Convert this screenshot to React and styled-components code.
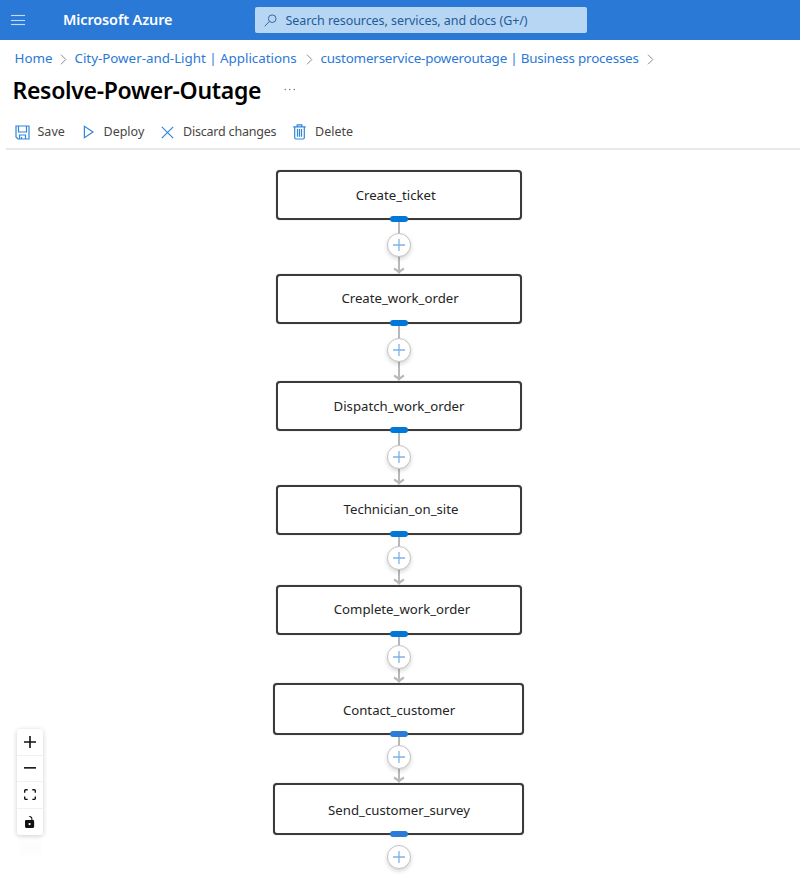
import React from 'react';
import styled, { createGlobalStyle } from 'styled-components';

const GlobalStyle = createGlobalStyle`
  * { box-sizing: border-box; }
  body {
    margin: 0;
    background: #fff;
    font-family: "Noto Sans", "Open Sans", sans-serif;
  }
  button { font: inherit; border: 0; background: none; padding: 0; margin: 0; }
`;

const Page = styled.div`
  width: 800px;
  height: 880px;
  display: flex;
  flex-direction: column;
  overflow: hidden;
  background: #fff;
`;

const TopBar = styled.header`
  height: 40px;
  flex: none;
  display: flex;
  align-items: center;
  background: #2a79d7;
`;

const MenuButton = styled.button`
  width: 14px;
  height: 12px;
  margin-left: 11px;
  display: flex;
  flex-direction: column;
  justify-content: space-between;
  padding: 1px 0;
`;

const MenuLine = styled.span`
  height: 1px;
  background: #c3daf5;
  box-shadow: 0 0 1px rgba(195, 218, 245, 0.6);
`;

const Brand = styled.div`
  width: 192px;
  padding-left: 38px;
  margin-right: -1px;
  color: #fff;
  font-size: 14.4px;
  font-weight: 600;
  line-height: 20px;
  letter-spacing: -0.08px;
  white-space: nowrap;
`;

const SearchBox = styled.div`
  width: 332px;
  height: 26px;
  margin-left: 39px;
  padding-left: 9px;
  display: flex;
  align-items: center;
  border-radius: 2px;
  background: #b7d6f3;
  color: #245b9b;
  font-size: 12.5px;
  line-height: 20px;
  letter-spacing: -0.06px;
  white-space: nowrap;
`;

const SearchText = styled.span`
  margin: 1px 0 0 8.5px;
`;

const Breadcrumb = styled.nav`
  height: 36px;
  flex: none;
  display: flex;
  align-items: center;
  padding-left: 14.5px;
`;

const Crumb = styled.a`
  width: ${(p) => p.$width}px;
  color: #2a79d7;
  font-size: 13.4px;
  line-height: 20px;
  letter-spacing: ${(p) => p.$spacing || 0}px;
  white-space: nowrap;
`;

const CrumbArrow = styled.svg`
  width: 7px;
  height: 11px;
  margin: 2px 8px 0 7px;
  flex: none;
`;

const TitleRow = styled.div`
  height: 38px;
  flex: none;
  display: flex;
  align-items: center;
  padding-left: 12.5px;
`;

const Title = styled.h1`
  width: 271px;
  margin: -11px 0 0;
  color: #000;
  font-size: 23px;
  font-weight: 600;
  line-height: 32px;
  letter-spacing: -0.31px;
  white-space: nowrap;
`;

const MoreDots = styled.svg`
  width: 12px;
  height: 3px;
  margin-top: -11px;
`;

const Toolbar = styled.div`
  height: 36px;
  flex: none;
  display: flex;
  align-items: center;
  margin-left: 6px;
  padding: 2px 0 0 8.5px;
  border-bottom: 2px solid #e9e9e9;
`;

const ToolButton = styled.button`
  width: ${(p) => p.$width}px;
  display: flex;
  align-items: center;
  gap: ${(p) => p.$gap}px;
  color: #484644;
  font-size: 12.5px;
  line-height: 18px;
  letter-spacing: ${(p) => p.$spacing || 0}px;
  white-space: nowrap;
  svg { flex: none; }
`;

const Canvas = styled.main`
  position: relative;
  flex: 1;
`;

const Node = styled.div`
  position: absolute;
  left: ${(p) => p.$x}px;
  top: ${(p) => p.$y}px;
  width: ${(p) => p.$w}px;
  height: ${(p) => p.$h}px;
  display: flex;
  align-items: center;
  justify-content: center;
  border: 2px solid #3b3b3b;
  border-radius: 4px;
  background: #fff;
  box-shadow: 0 0 1px rgba(50, 50, 50, 0.5);
`;

const NodeLabel = styled.span`
  position: relative;
  left: ${(p) => p.$dx}px;
  top: ${(p) => p.$dy}px;
  color: #242424;
  font-size: 13.2px;
  line-height: 18px;
  white-space: nowrap;
`;

const Handle = styled.span`
  position: absolute;
  left: 390px;
  top: ${(p) => p.$y}px;
  width: 18px;
  height: 6px;
  border-radius: 3px;
  background: ${(p) => p.$color};
`;

const Edge = styled.svg`
  position: absolute;
  left: 391px;
  top: ${(p) => p.$y}px;
`;

const AddButton = styled.button`
  position: absolute;
  left: 387px;
  top: ${(p) => p.$y}px;
  width: 24px;
  height: 24px;
  display: flex;
  align-items: center;
  justify-content: center;
  border: 1px solid #c3c2c6;
  border-radius: 50%;
  background: #fff;
  box-shadow: 0 2px 4px rgba(0, 0, 0, 0.17);
`;

const Controls = styled.div`
  position: absolute;
  left: 17px;
  top: 579px;
  width: 26px;
  display: flex;
  flex-direction: column;
  border-radius: 3px;
  background: #fff;
  box-shadow: 0 1px 5px rgba(0, 0, 0, 0.2);
`;

const ControlButton = styled.button`
  height: 26.5px;
  display: flex;
  align-items: center;
  justify-content: center;
  border-bottom: 1px solid #f1f1f1;
  &:last-child { border-bottom: 0; }
  svg { display: block; fill: #111; }
`;

const ControlsFade = styled.div`
  position: absolute;
  left: 20px;
  top: 692px;
  width: 21px;
  height: 13px;
  background: #fdfdfd;
`;

const Chevron = () => (
  <CrumbArrow viewBox="0 0 7 11" fill="none" stroke="#8a8a8a" strokeWidth="1">
    <path d="M1 .7 5.8 5.5 1 10.3" />
  </CrumbArrow>
);

const SearchIcon = () => (
  <svg width="13" height="13" viewBox="0 0 13 13" fill="none" stroke="#37699f" strokeWidth="1">
    <circle cx="8.2" cy="4.7" r="3.8" />
    <path d="M5.5 7.4.7 12.2" />
  </svg>
);

const SaveIcon = () => (
  <svg width="15" height="15" viewBox="0 0 15 15" fill="none" stroke="#2f86d8" strokeWidth="1.2">
    <path d="M1 1h13v13H3L1 12z" />
    <path d="M3.5 1v6h8V1M4.5 14v-4h6v4M6.5 14v-2" />
  </svg>
);

const DeployIcon = () => (
  <svg width="12" height="14" viewBox="0 0 12 14" fill="none" stroke="#2f86d8" strokeWidth="1.2">
    <path d="M1.4 1.3v11.4L10 7z" />
  </svg>
);

const DiscardIcon = () => (
  <svg width="13" height="13" viewBox="0 0 13 13" fill="none" stroke="#2f86d8" strokeWidth="1.2">
    <path d="m.8.8 11.4 11.4M12.2.8.8 12.2" />
  </svg>
);

const DeleteIcon = () => (
  <svg width="13" height="16" viewBox="0 0 13 16" fill="none" stroke="#2f86d8" strokeWidth="1.2">
    <path d="M.3 2.8h12.4M4.2 2.6V.9h4.6v1.7M1.7 3v10.8q0 1.2 1.2 1.2h7.2q1.2 0 1.2-1.2V3M4.5 5v7.8M6.5 5v7.8M8.5 5v7.8" />
  </svg>
);

const PlusIcon = ({ color }) => (
  <svg width="12" height="12" viewBox="0 0 12 12" stroke={color} strokeWidth="1.3">
    <path d="M6 0v12M0 6h12" />
  </svg>
);

const FlowEdge = ({ from, to }) => {
  const h = to - from;
  return (
    <Edge $y={from} width="16" height={h} viewBox={`0 0 16 ${h}`} fill="none" stroke="#b9b9bd" strokeWidth="2">
      <path d={`M8 0V${h - 1}`} />
      <path d={`M3 ${h - 5.5}Q6 ${h - 4} 8 ${h - 1.5}Q10 ${h - 4} 13 ${h - 5.5}`} />
    </Edge>
  );
};

const blue = '#0078d7';
const softBlue = '#2b7bd9';
const nodes = [
  { label: 'Create_ticket', x: 276, y: 19.6, w: 246, h: 50.6, dx: -3.3, dy: 0, plus: 83, handle: blue },
  { label: 'Create_work_order', x: 276, y: 123.7, w: 246, h: 50.3, dx: 1, dy: -0.5, plus: 187.5, handle: blue },
  { label: 'Dispatch_work_order', x: 276, y: 230.5, w: 246, h: 50.3, dx: 0, dy: 0.4, plus: 294.5, handle: blue },
  { label: 'Technician_on_site', x: 276, y: 334.5, w: 246, h: 50.2, dx: 2, dy: -0.5, plus: 395.5, handle: blue },
  { label: 'Complete_work_order', x: 276, y: 434.5, w: 246, h: 50, dx: 3, dy: -0.5, plus: 495.3, handle: blue },
  { label: 'Contact_customer', x: 273.4, y: 533.2, w: 251, h: 52, dx: 0.2, dy: 1, plus: 595, handle: softBlue },
  { label: 'Send_customer_survey', x: 273.4, y: 633.2, w: 251, h: 52.2, dx: 0.2, dy: 1, plus: 695.3, handle: softBlue },
];

export default function App() {
  return (
    <Page>
      <GlobalStyle />
      <TopBar>
        <MenuButton aria-label="Menu">
          <MenuLine />
          <MenuLine />
          <MenuLine />
        </MenuButton>
        <Brand>Microsoft Azure</Brand>
        <SearchBox>
          <SearchIcon />
          <SearchText>Search resources, services, and docs (G+/)</SearchText>
        </SearchBox>
      </TopBar>
      <Breadcrumb>
        <Crumb $width={38}>Home</Crumb>
        <Chevron />
        <Crumb $width={224} $spacing={-0.03}>City-Power-and-Light | Applications</Crumb>
        <Chevron />
        <Crumb $width={319} $spacing={-0.19}>customerservice-poweroutage | Business processes</Crumb>
        <Chevron />
      </Breadcrumb>
      <TitleRow>
        <Title>Resolve-Power-Outage</Title>
        <MoreDots viewBox="0 0 12 3" fill="#777">
          <circle cx="1.3" cy="1.5" r=".8" />
          <circle cx="5.8" cy="1.5" r=".8" />
          <circle cx="10.3" cy="1.5" r=".8" />
        </MoreDots>
      </TitleRow>
      <Toolbar>
        <ToolButton $width={68} $gap={8}><SaveIcon />Save</ToolButton>
        <ToolButton $width={78.5} $gap={9}><DeployIcon />Deploy</ToolButton>
        <ToolButton $width={131.5} $gap={9} $spacing={-0.2}><DiscardIcon />Discard changes</ToolButton>
        <ToolButton $width={64} $gap={9.5}><DeleteIcon />Delete</ToolButton>
      </Toolbar>
      <Canvas>
        {nodes.slice(0, -1).map((n, i) => (
          <FlowEdge key={n.label} from={Math.round(n.y + n.h)} to={Math.round(nodes[i + 1].y)} />
        ))}
        {nodes.map((n) => (
          <React.Fragment key={n.label}>
            <Node $x={n.x} $y={n.y} $w={n.w} $h={n.h}>
              <NodeLabel $dx={n.dx} $dy={n.dy}>{n.label}</NodeLabel>
            </Node>
            <Handle $y={n.y + n.h - 4} $color={n.handle} />
            <AddButton $y={n.plus} aria-label="Add step"><PlusIcon color="#7db2ea" /></AddButton>
          </React.Fragment>
        ))}
        <Controls>
          <ControlButton aria-label="Zoom in">
            <svg width="12" height="12" viewBox="0 0 32 32"><path d="M32 18.133H18.133V32h-4.266V18.133H0v-4.266h13.867V0h4.266v13.867H32z" /></svg>
          </ControlButton>
          <ControlButton aria-label="Zoom out">
            <svg width="12" height="2" viewBox="0 0 32 5"><path d="M0 0h32v4.2H0z" /></svg>
          </ControlButton>
          <ControlButton aria-label="Fit view">
            <svg width="12" height="11.3" viewBox="0 0 32 30"><path d="M3.692 4.63c0-.53.4-.938.939-.938h5.215V0H4.708C2.13 0 0 2.054 0 4.63v5.216h3.692V4.631zM27.354 0h-5.2v3.692h5.17c.53 0 .984.4.984.939v5.215H32V4.631A4.624 4.624 0 0 0 27.354 0zm.954 24.83c0 .532-.4.94-.939.94h-5.215v3.768h5.215c2.577 0 4.631-2.13 4.631-4.707v-5.139h-3.692v5.139zm-23.677.94a.919.919 0 0 1-.939-.94v-5.138H0v5.139c0 2.577 2.13 4.707 4.708 4.707h5.138V25.77H4.631z" /></svg>
          </ControlButton>
          <ControlButton aria-label="Unlock">
            <svg width="9.4" height="12" viewBox="0 0 25 32"><path d="M21.333 10.667H19.81V7.619C19.81 3.429 16.38 0 12.19 0c-4.114 1.828-1.37 2.133.305 2.438 1.676.305 4.42 2.59 4.42 5.181v3.048H3.047A3.056 3.056 0 0 0 0 13.714v15.238A3.056 3.056 0 0 0 3.048 32h18.285a3.056 3.056 0 0 0 3.048-3.048V13.714a3.056 3.056 0 0 0-3.048-3.047zM12.19 24.533a3.056 3.056 0 0 1-3.047-3.047 3.056 3.056 0 0 1 3.047-3.048 3.056 3.056 0 0 1 3.048 3.048 3.056 3.056 0 0 1-3.048 3.047z" /></svg>
          </ControlButton>
        </Controls>
        <ControlsFade />
      </Canvas>
    </Page>
  );
}
